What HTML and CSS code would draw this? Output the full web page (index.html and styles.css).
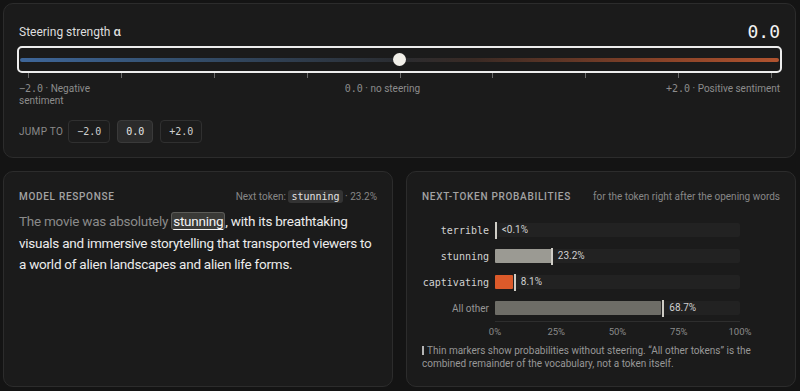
FILE: index.html
```html
<!DOCTYPE html>
<html lang="en">
<head>
  <meta charset="UTF-8">
  <title>Steering demo</title>
  <link rel="stylesheet" href="styles.css">
</head>
<body>

  <!-- Steering control -->
  <div class="card steer">
    <div class="steer-head">
      <span class="steer-title">Steering strength <b>α</b></span>
      <span class="steer-value mono">0.0</span>
    </div>

    <div class="range">
      <div class="track"></div>
      <div class="thumb" style="left: 50%;"></div>
    </div>
    <div class="ticks">
      <i></i><i></i><i></i><i></i><i></i><i></i><i></i><i></i><i></i>
    </div>
    <div class="range-labels">
      <span class="lab-left"><span class="mono">−2.0</span> · Negative sentiment</span>
      <span><span class="mono">0.0</span> · no steering</span>
      <span><span class="mono">+2.0</span> · Positive sentiment</span>
    </div>

    <div class="jump">
      <span class="jump-label">JUMP TO</span>
      <span class="jbtn mono">−2.0</span>
      <span class="jbtn mono active">0.0</span>
      <span class="jbtn mono">+2.0</span>
    </div>
  </div>

  <div class="bottom">
    <!-- Model response -->
    <div class="card">
      <div class="card-head">
        <span class="card-title">MODEL RESPONSE</span>
        <span class="card-note">Next token: <span class="chip mono">stunning</span> · 23.2%</span>
      </div>
      <p class="response">
        <span class="prompt">The movie was absolutely </span><span class="tok">stunning</span>, with its breathtaking visuals and immersive storytelling that transported viewers to a world of alien landscapes and alien life forms.
      </p>
    </div>

    <!-- Probabilities -->
    <div class="card">
      <div class="card-head">
        <span class="card-title">NEXT-TOKEN PROBABILITIES</span>
        <span class="card-note">for the token right after the opening words</span>
      </div>

      <div class="chart">
        <div class="row">
          <span class="row-label mono">terrible</span>
          <div class="bar-track">
            <div class="bar" style="width: 0%;"></div>
            <div class="marker" style="left: 0.3%;"></div>
            <span class="bar-val" style="left: calc(0.3% + 6px);">&lt;0.1%</span>
          </div>
        </div>
        <div class="row">
          <span class="row-label mono">stunning</span>
          <div class="bar-track">
            <div class="bar grey" style="width: 23.2%;"></div>
            <div class="marker" style="left: 23.2%;"></div>
            <span class="bar-val" style="left: calc(23.2% + 6px);">23.2%</span>
          </div>
        </div>
        <div class="row">
          <span class="row-label mono">captivating</span>
          <div class="bar-track">
            <div class="bar orange" style="width: 7.4%;"></div>
            <div class="marker" style="left: 8.1%;"></div>
            <span class="bar-val" style="left: calc(8.1% + 6px);">8.1%</span>
          </div>
        </div>
        <div class="row">
          <span class="row-label other">All other</span>
          <div class="bar-track">
            <div class="bar dark" style="width: 67.8%;"></div>
            <div class="marker" style="left: 68.7%;"></div>
            <span class="bar-val" style="left: calc(68.7% + 6px);">68.7%</span>
          </div>
        </div>
        <div class="row">
          <span></span>
          <div class="axis">
            <span style="left: 0%;">0%</span>
            <span style="left: 25%;">25%</span>
            <span style="left: 50%;">50%</span>
            <span style="left: 75%;">75%</span>
            <span style="left: 100%;">100%</span>
          </div>
        </div>
      </div>

      <p class="foot"><span class="foot-mark"></span>Thin markers show probabilities without steering. “All other tokens” is the combined remainder of the vocabulary, not a token itself.</p>
    </div>
  </div>

</body>
</html>
```

FILE: styles.css
```css
* {
  box-sizing: border-box;
}

html, body {
  height: 100%;
}

body {
  margin: 0;
  padding: 3px 4px 4px 3px;
  background-color: #141414;
  color: #dcdcdc;
  font-family: Roboto, "Noto Sans", sans-serif;
  display: flex;
  flex-direction: column;
  gap: 13px;
}

.mono {
  font-family: "DejaVu Sans Mono", "Liberation Mono", monospace;
}

.card {
  background-color: #1b1b1b;
  border: 1px solid #2c2c2c;
  border-radius: 10px;
  padding: 15px 15px;
}

/* top card */

.steer {
  height: 155px;
}

.steer-head {
  display: flex;
  justify-content: space-between;
  align-items: center;
  height: 22px;
  margin-top: 1px;
}

.steer-title {
  font-size: 12px;
  color: #dedede;
}

.steer-title b {
  font-weight: 500;
  font-size: 13px;
}

.steer-value {
  font-size: 18px;
  color: #f2f2f2;
}

.range {
  position: relative;
  margin: 4px -2px 0;
  height: 27px;
  border: 2px solid #ededed;
  border-radius: 5px;
  padding: 0 1px;
  display: flex;
  align-items: center;
}

.track {
  flex: 1;
  height: 4px;
  border-radius: 2px;
  background: linear-gradient(to right, #3e6699 0%, #34506f 20%, #2a2c30 50%, #3a2a24 60%, #8a4328 85%, #b0532f 100%);
}

.thumb {
  position: absolute;
  top: 50%;
  width: 13px;
  height: 13px;
  margin: -6.5px 0 0 -6.5px;
  border-radius: 50%;
  background-color: #f1efe9;
}

.ticks {
  display: flex;
  justify-content: space-between;
  padding: 0 8px 0 9px;
  height: 5px;
}

.ticks i {
  width: 1px;
  background-color: #6a6a6a;
}

.range-labels {
  display: flex;
  justify-content: space-between;
  align-items: flex-start;
  margin-top: 5px;
  font-size: 10px;
  line-height: 12px;
  color: #8c8c8c;
}

.lab-left {
  max-width: 80px;
}

.jump {
  display: flex;
  align-items: center;
  gap: 7px;
  margin-top: 13px;
}

.jump-label {
  font-size: 10px;
  letter-spacing: 0.3px;
  color: #8a8a8a;
  margin-right: -2px;
}

.jbtn {
  display: inline-block;
  height: 23px;
  line-height: 21px;
  padding: 0 8px;
  font-size: 10px;
  color: #cfcfcf;
  border: 1px solid #303030;
  border-radius: 4px;
  background-color: #1c1c1c;
}

.jbtn.active {
  background-color: #2b2b2b;
  border-color: #3a3a3a;
  color: #e6e6e6;
}

/* bottom cards */

.bottom {
  flex: 1;
  display: grid;
  grid-template-columns: 1fr 1fr;
  gap: 13px;
}

.card-head {
  display: flex;
  justify-content: space-between;
  align-items: center;
  height: 18px;
}

.card-title {
  font-size: 10px;
  font-weight: 500;
  letter-spacing: 0.7px;
  color: #a3a3a3;
}

.card-note {
  font-size: 10px;
  color: #878787;
}

.chip {
  background-color: #333333;
  color: #e2e2e2;
  border-radius: 3px;
  padding: 1px 3px;
  font-size: 10px;
}

.response {
  margin: 6px 0 0;
  font-size: 13.5px;
  letter-spacing: -0.25px;
  line-height: 21.5px;
  color: #ececec;
}

.prompt {
  color: #8a8a8a;
}

.tok {
  background-color: #3a3a37;
  border: 1px solid #5c5c58;
  border-radius: 3px;
  padding: 0 1px;
  text-decoration: underline;
  text-underline-offset: 3px;
  color: #f4f4f4;
}

/* chart */

.chart {
  margin-top: 18px;
  width: 318px;
  display: flex;
  flex-direction: column;
  gap: 12px;
}

.row {
  display: grid;
  grid-template-columns: 67px 1fr;
  gap: 6px;
  align-items: center;
}

.row-label {
  text-align: right;
  font-size: 10px;
  color: #d2d2d2;
}

.row-label.other {
  font-family: Roboto, "Noto Sans", sans-serif;
  color: #969696;
}

.bar-track {
  position: relative;
  height: 14px;
  background-color: #222222;
  border-radius: 2px;
}

.bar {
  height: 100%;
  border-radius: 1px;
}

.bar.grey {
  background-color: #9b9a93;
}

.bar.orange {
  background-color: #dc5a2a;
}

.bar.dark {
  background-color: #6e6d67;
}

.marker {
  position: absolute;
  top: -1px;
  bottom: -2px;
  width: 2px;
  margin-left: -1px;
  background-color: #cfcdc6;
}

.bar-val {
  position: absolute;
  top: 0;
  font-size: 10px;
  line-height: 14px;
  color: #d0d0d0;
}

.axis {
  position: relative;
  height: 17px;
  border-top: 1px solid #2e2e2e;
  margin-top: -6px;
}

.axis span {
  position: absolute;
  top: 4px;
  transform: translateX(-50%);
  font-size: 9.5px;
  color: #8a8a8a;
}

.foot {
  margin: 7px 0 0;
  font-size: 10px;
  line-height: 12.5px;
  color: #979797;
}

.foot-mark {
  display: inline-block;
  width: 2px;
  height: 9px;
  margin-right: 3px;
  background-color: #b5b5b5;
  vertical-align: -1px;
}
```
